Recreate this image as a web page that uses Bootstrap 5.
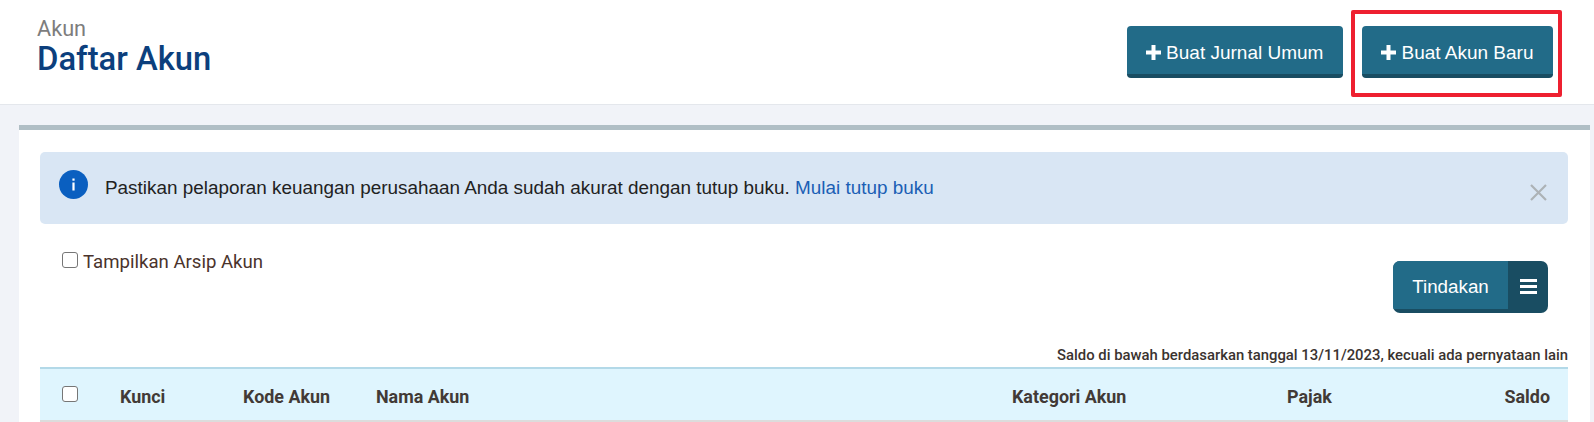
<!DOCTYPE html>
<html lang="id">
<head>
<meta charset="utf-8">
<title>Daftar Akun</title>
<link href="https://cdn.jsdelivr.net/npm/bootstrap@5.3.0/dist/css/bootstrap.min.css" rel="stylesheet">
<style>
html,body{height:422px;overflow:hidden}
body{background:#f1f3f8;font-family:Roboto,sans-serif;color:#3a3330}
.top-head{height:105px;background:#fff;border-bottom:1px solid #e4e7ec;padding:18px 32px 0 37px}
.crumb{font-size:21.700px;line-height:22px;color:#7d7d7d}
.page-title{font-size:32.800px;line-height:38px;font-weight:500;color:#0c3f7d;margin:0}
.head-actions{gap:8px;padding-top:8px}
.hl-box{border:4px solid #ee2030;border-radius:2px;margin-top:-16px;padding:12px 5px 15px 7px}
.tbtn{background:#226b88;color:#fff;border:0;border-bottom:4px solid #194d62;border-radius:4px;font-family:"Liberation Sans",Arial,sans-serif;font-size:19px;height:52px;padding:6px 19.500px 0;white-space:nowrap}
.tbtn svg{vertical-align:-1px;margin-right:5px}
.panel-wrap{margin:20px 4px 0 19px;background:#fff;border-top:5px solid #b0bec5;padding:22px 22px 0 21px;height:297px}
.info-alert{background:#d9e6f4;border-radius:5px;height:72px;padding:18px 21px 18px 19px;font-family:"Liberation Sans",Arial,sans-serif;font-size:18.900px;color:#222}
.info-alert a{color:#1b5fb5;text-decoration:none}
.info-text{margin-left:17px;line-height:30px;padding-top:3px}
.close-x{margin-top:14px}
.chk{width:16px;height:16px;border:1px solid #767676;border-radius:3px;background:#fff;flex:none;display:block}
.filter-row{height:123px;padding:28px 20px 0 22px}
.filter-label{font-size:18.600px;line-height:20px;margin-left:5px;color:#4a332c}
.act-group{margin-top:9px;height:52px;font-family:"Liberation Sans",Arial,sans-serif;font-size:18.800px;color:#fff;border-radius:7px;overflow:hidden;background:#194d62}
.act-main{width:115px;height:48px;background:#226b88;line-height:52px;text-align:center}
.act-menu{width:40px;display:flex;flex-direction:column;gap:3px;align-items:center;padding-top:18px}
.act-menu i{display:block;width:17px;height:3px;background:#fff}
.note{font-size:14.850px;font-weight:500;text-align:right;line-height:16px;color:#3a3330;height:20px}
.head-row{background:#dff5fe;border-top:2px solid #b3d9e8;border-bottom:2px solid #dcdcdc;height:55px;font-weight:700;font-size:17.900px;color:#423a36;padding-left:22px;line-height:56px}
.c-chk{width:58px;padding-top:17px}
.c1{width:123px}
.c2{width:133px}
.c3{width:636px}
.c4{width:275px}
.c5{flex:1}
.c6{padding-right:18px}
</style>
</head>
<body>
<div class="top-head d-flex justify-content-between">
  <div>
    <div class="crumb">Akun</div>
    <h1 class="page-title">Daftar Akun</h1>
  </div>
  <div class="head-actions d-flex align-items-start">
    <button class="tbtn" type="button"><svg width="15" height="15" viewBox="0 0 15 15"><path fill="#fff" d="M5.500 0h4v5.500H15v4H9.500V15h-4V9.500H0v-4h5.500z"/></svg>Buat Jurnal Umum</button>
    <div class="hl-box"><button class="tbtn d-block" type="button"><svg width="15" height="15" viewBox="0 0 15 15"><path fill="#fff" d="M5.500 0h4v5.500H15v4H9.500V15h-4V9.500H0v-4h5.500z"/></svg>Buat Akun Baru</button></div>
  </div>
</div>
<div class="panel-wrap">
  <div class="info-alert d-flex justify-content-between align-items-start">
    <div class="d-flex align-items-start">
      <svg width="29" height="29" viewBox="0 0 29 29"><circle cx="14.500" cy="14.500" r="14.500" fill="#0a5fc0"/><rect x="13.400" y="12.500" width="2.200" height="8" fill="#fff"/><rect x="13.400" y="8.500" width="2.200" height="2.200" fill="#fff"/></svg>
      <div class="info-text">Pastikan pelaporan keuangan perusahaan Anda sudah akurat dengan tutup buku. <a href="#">Mulai tutup buku</a></div>
    </div>
    <svg class="close-x" width="17" height="17" viewBox="0 0 17 17"><path d="M1 1l15 15M16 1L1 16" stroke="#adb2b6" stroke-width="2.200" fill="none"/></svg>
  </div>
  <div class="filter-row d-flex justify-content-between align-items-start">
    <div class="d-flex align-items-start"><span class="chk"></span><span class="filter-label">Tampilkan Arsip Akun</span></div>
    <div class="act-group d-flex"><div class="act-main">Tindakan</div><div class="act-menu"><i></i><i></i><i></i></div></div>
  </div>
  <div class="note">Saldo di bawah berdasarkan tanggal 13/11/2023, kecuali ada pernyataan lain</div>
  <div class="head-row d-flex">
    <div class="c-chk"><span class="chk"></span></div>
    <div class="c1">Kunci</div>
    <div class="c2">Kode Akun</div>
    <div class="c3">Nama Akun</div>
    <div class="c4">Kategori Akun</div>
    <div class="c5">Pajak</div>
    <div class="c6">Saldo</div>
  </div>
</div>
<script src="https://cdn.jsdelivr.net/npm/bootstrap@5.3.0/dist/js/bootstrap.bundle.min.js"></script>
</body>
</html>
